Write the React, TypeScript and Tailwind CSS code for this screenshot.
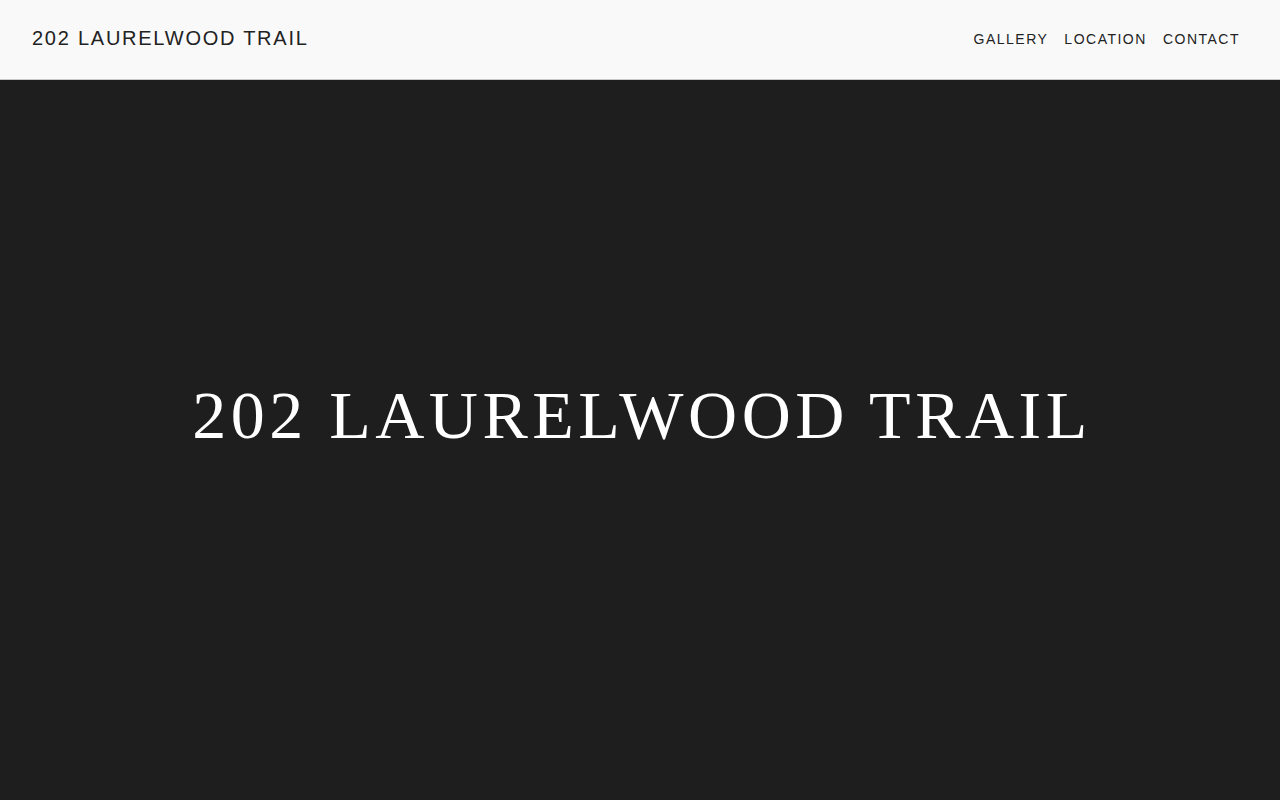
import React from "react";

export default function App() {
  return (
    <div className="w-full h-[800px] flex flex-col bg-[#1e1e1e] overflow-hidden">
      <header className="h-[80px] shrink-0 bg-[#f9f9f9] border-b border-[#c8c8c8] flex items-center justify-between pl-[32px] pr-[40px] pb-[4px] text-[#222222]" style={{ fontFamily: '"Liberation Sans", Arial, sans-serif' }}>
        <div className="text-[20px] tracking-[1.75px] leading-none">202 LAURELWOOD TRAIL</div>
        <nav className="flex items-center gap-[16px] text-[14px] tracking-[1.5px] leading-none pt-[2px]">
          <a>GALLERY</a>
          <a>LOCATION</a>
          <a>CONTACT</a>
        </nav>
      </header>
      <main className="flex-1 flex items-center justify-center pb-[50px]">
        <h1 className="text-white text-[68px] font-normal leading-none tracking-[4.5px] pl-[4px]" style={{ fontFamily: '"Liberation Serif", "Times New Roman", serif' }}>
          202 LAURELWOOD TRAIL
        </h1>
      </main>
    </div>
  );
}
